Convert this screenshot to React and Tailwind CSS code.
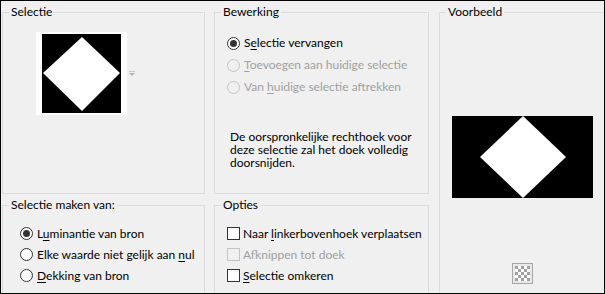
import React from 'react'

const font = "font-['Lato','Liberation_Sans',sans-serif]"

function Mn({ text, at }) {
  // mnemonic: underline one letter
  return (
    <span>
      {text.slice(0, at)}
      <u className="underline underline-offset-2">{text[at]}</u>
      {text.slice(at + 1)}
    </span>
  )
}

function Radio({ checked, disabled, label, at, h = 'h-[22px]' }) {
  return (
    <div className={`flex ${h} items-center gap-[4px]`}>
      <span
        className={`flex h-[13px] w-[13px] shrink-0 items-center justify-center rounded-full border ${
          disabled ? 'border-[#c4c4c4] bg-[#f0f0f0]' : 'border-[#333333] bg-white'
        }`}
      >
        {checked && <span className="h-[7px] w-[7px] rounded-full bg-[#333333]" />}
      </span>
      <span className={disabled ? 'text-[#a0a0a0]' : 'text-black'}>
        <Mn text={label} at={at} />
      </span>
    </div>
  )
}

function Check({ disabled, label, at }) {
  return (
    <div className="flex h-[21px] items-center gap-[3px]">
      <span
        className={`h-[13px] w-[13px] shrink-0 border ${
          disabled ? 'border-[#c4c4c4] bg-[#f0f0f0]' : 'border-[#333333] bg-white'
        }`}
      />
      <span className={disabled ? 'text-[#a0a0a0]' : 'text-black'}>
        <Mn text={label} at={at} />
      </span>
    </div>
  )
}

function Group({ title, className = '', children }) {
  return (
    <fieldset className={`border border-[#dcdcdc] ${className}`}>
      <legend className="ml-[6px] px-[2px] leading-[16px]">{title}</legend>
      {children}
    </fieldset>
  )
}

function Checker() {
  const cells = []
  for (let r = 0; r < 5; r++) {
    for (let c = 0; c < 5; c++) {
      cells.push(
        <span key={`${r}-${c}`} className={(r + c) % 2 === 0 ? 'bg-[#a0a0a0]' : 'bg-white'} />
      )
    }
  }
  return (
    <div className="border border-[#a8a8a8] bg-[#e8e8e8] p-[2px]">
      <div className="grid h-[15px] w-[15px] grid-cols-5 grid-rows-5">{cells}</div>
    </div>
  )
}

export default function App() {
  return (
    <div
      className={`${font} h-[294px] w-[605px] overflow-hidden border border-black bg-[#f0f0f0] text-[12px] leading-[16px] text-black`}
    >
      <div className="grid grid-cols-[203px_216px_170px] grid-rows-[190px_100px] gap-x-[8px] pl-[1px] pt-[3px]">
        <Group title="Selectie" className="h-[190px]">
          <div className="ml-[33px] mt-[12px] flex items-center gap-[2px]">
            <div className="bg-white px-[6px] py-[2px]">
              <svg width="79" height="79" viewBox="0 0 79 79" className="block">
                <rect width="79" height="79" fill="#000" />
                <polygon points="40,3 78,39 40,77 1,39" fill="#fff" />
              </svg>
            </div>
            <svg width="6" height="5" viewBox="0 0 6 5" className="block">
              <rect x="0" y="0" width="6" height="1" fill="#c8c8c8" />
              <polygon points="0,2 6,2 3,5" fill="#b4b4b4" />
            </svg>
          </div>
        </Group>

        <Group title="Bewerking" className="ml-[1px] h-[190px]">
          <div className="ml-[12px] mt-[12px] flex flex-col">
            <Radio checked label="Selectie vervangen" at={1} />
            <Radio disabled label="Toevoegen aan huidige selectie" at={0} />
            <Radio disabled label="Van huidige selectie aftrekken" at={4} />
          </div>
          <p className="ml-[15px] mt-[32px] w-[190px] leading-[13px]">
            De oorspronkelijke rechthoek voor deze selectie zal het doek volledig doorsnijden.
          </p>
        </Group>

        <Group title="Voorbeeld" className="row-span-2 ml-[2px] h-[300px]">
          <div className="ml-[12px] mt-[96px] flex w-[141px] flex-col items-center">
            <svg width="141" height="82" viewBox="0 0 141 82" className="block">
              <rect width="141" height="82" fill="#000" />
              <polygon points="71,0 114,41 71,82 28,41" fill="#fff" />
            </svg>
            <div className="mt-[65px]">
              <Checker />
            </div>
          </div>
        </Group>

        <Group title="Selectie maken van:" className="mt-[3px] h-[110px]">
          <div className="ml-[17px] mt-[10px] flex flex-col">
            <Radio checked h="h-[21px]" label="Luminantie van bron" at={1} />
            <Radio h="h-[21px]" label="Elke waarde niet gelijk aan nul" at={28} />
            <Radio h="h-[21px]" label="Dekking van bron" at={0} />
          </div>
        </Group>

        <Group title="Opties" className="ml-[1px] mt-[3px] h-[110px]">
          <div className="ml-[12px] mt-[10px] flex flex-col">
            <Check label="Naar linkerbovenhoek verplaatsen" at={5} />
            <Check disabled label="Afknippen tot doek" at={2} />
            <Check label="Selectie omkeren" at={0} />
          </div>
        </Group>
      </div>
    </div>
  )
}
